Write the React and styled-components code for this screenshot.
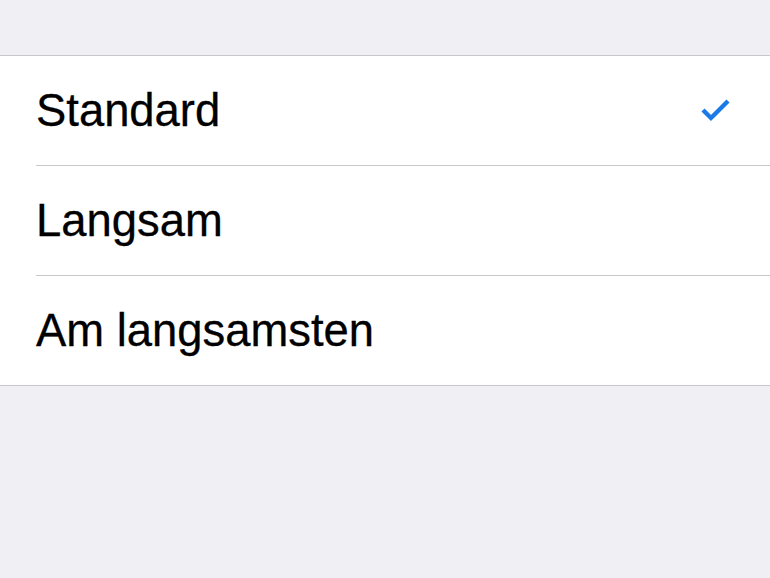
import React from "react";
import styled, { createGlobalStyle } from "styled-components";

const Global = createGlobalStyle`
  html, body {
    margin: 0;
    padding: 0;
    background: #efeff4;
    font-family: "Liberation Sans", Arial, sans-serif;
  }
`;

const Page = styled.div`
  width: 770px;
  height: 578px;
  background: #efeff4;
  padding-top: 55px;
  box-sizing: border-box;
`;

const Group = styled.div`
  background: #fff;
  border-top: 1px solid #c8c7cc;
  border-bottom: 1px solid #c8c7cc;
`;

const Row = styled.div`
  height: 109px;
  margin-left: 36px;
  padding-right: 38px;
  display: flex;
  align-items: center;
  justify-content: space-between;
  border-bottom: ${p => (p.last ? "none" : "1px solid #c8c7cc")};
`;

const Label = styled.span`
  font-size: 45.4px;
  color: #000;
  -webkit-text-stroke: 0.3px #000;
`;

const Check = () => (
  <svg width="32" height="26" viewBox="0 0 32 26" fill="none">
    <path d="M3 12 L11 20 L28 3" stroke="#1a7ae8" strokeWidth="4.4" strokeLinecap="butt" strokeLinejoin="miter" />
  </svg>
);

const options = ["Standard", "Langsam", "Am langsamsten"];

export default function App() {
  return (
    <Page>
      <Global />
      <Group>
        {options.map((o, i) => (
          <Row key={o} last={i === options.length - 1}>
            <Label>{o}</Label>
            {i === 0 && <Check />}
          </Row>
        ))}
      </Group>
    </Page>
  );
}
